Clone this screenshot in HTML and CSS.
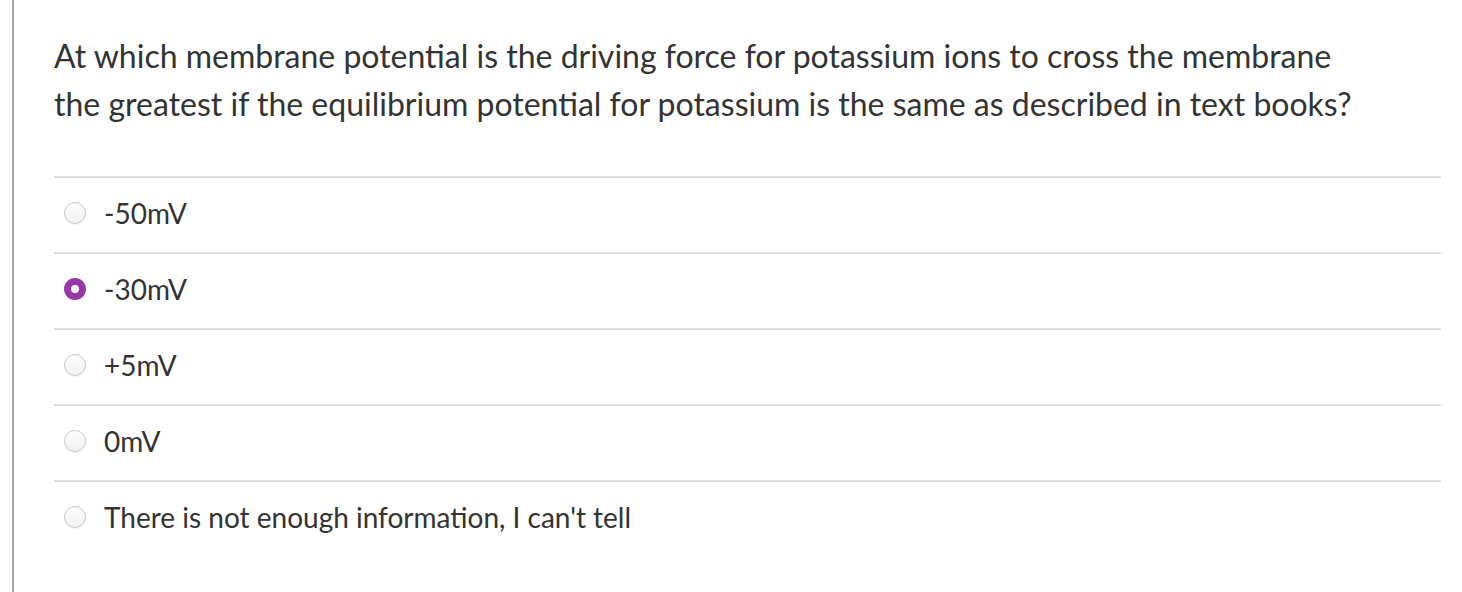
FILE: index.html
```html
<!DOCTYPE html>
<html>
<head>
<meta charset="utf-8">
<link rel="stylesheet" href="styles.css">
</head>
<body>
<div class="page">
  <div class="question">
    <p class="question-text">At which membrane potential is the driving force for potassium ions to cross the membrane the greatest if the equilibrium potential for potassium is the same as described in text books?</p>
    <div class="answers">
      <label class="answer"><span class="radio"></span><span class="answer-text">-50mV</span></label>
      <label class="answer"><span class="radio checked"></span><span class="answer-text">-30mV</span></label>
      <label class="answer"><span class="radio"></span><span class="answer-text">+5mV</span></label>
      <label class="answer"><span class="radio"></span><span class="answer-text">0mV</span></label>
      <label class="answer"><span class="radio"></span><span class="answer-text">There is not enough information, I can't tell</span></label>
    </div>
  </div>
</div>
</body>
</html>
```

FILE: styles.css
```css
html, body {
  margin: 0;
  padding: 0;
  background: #fff;
}
body {
  font-family: Lato, "Open Sans", sans-serif;
  color: #333;
}
.page {
  margin-left: 12px;
  border-left: 2px solid #a8a8a8;
  min-height: 592px;
  box-sizing: border-box;
  padding: 32px 21px 0 40px;
}
.question-text {
  margin: 0;
  font-size: 32px;
  line-height: 48px;
  color: #333;
  max-width: 1320px;
}
.answers {
  margin-top: 48px;
}
.answer {
  display: flex;
  align-items: center;
  height: 70px;
  padding: 0 0 4px 10px;
  border-top: 2px solid #dedede;
}
.radio {
  width: 20px;
  height: 20px;
  border-radius: 50%;
  border: 1px solid #c9c9c9;
  background: linear-gradient(#fff, #f0f0f0);
  box-shadow: 0 1px 1px rgba(0, 0, 0, 0.06);
  flex: none;
}
.radio.checked {
  width: 8px;
  height: 8px;
  border: 7px solid #9837a7;
  background: #fff;
  box-shadow: none;
}
.answer-text {
  margin-left: 18px;
  font-size: 28px;
  color: #333;
}
```
